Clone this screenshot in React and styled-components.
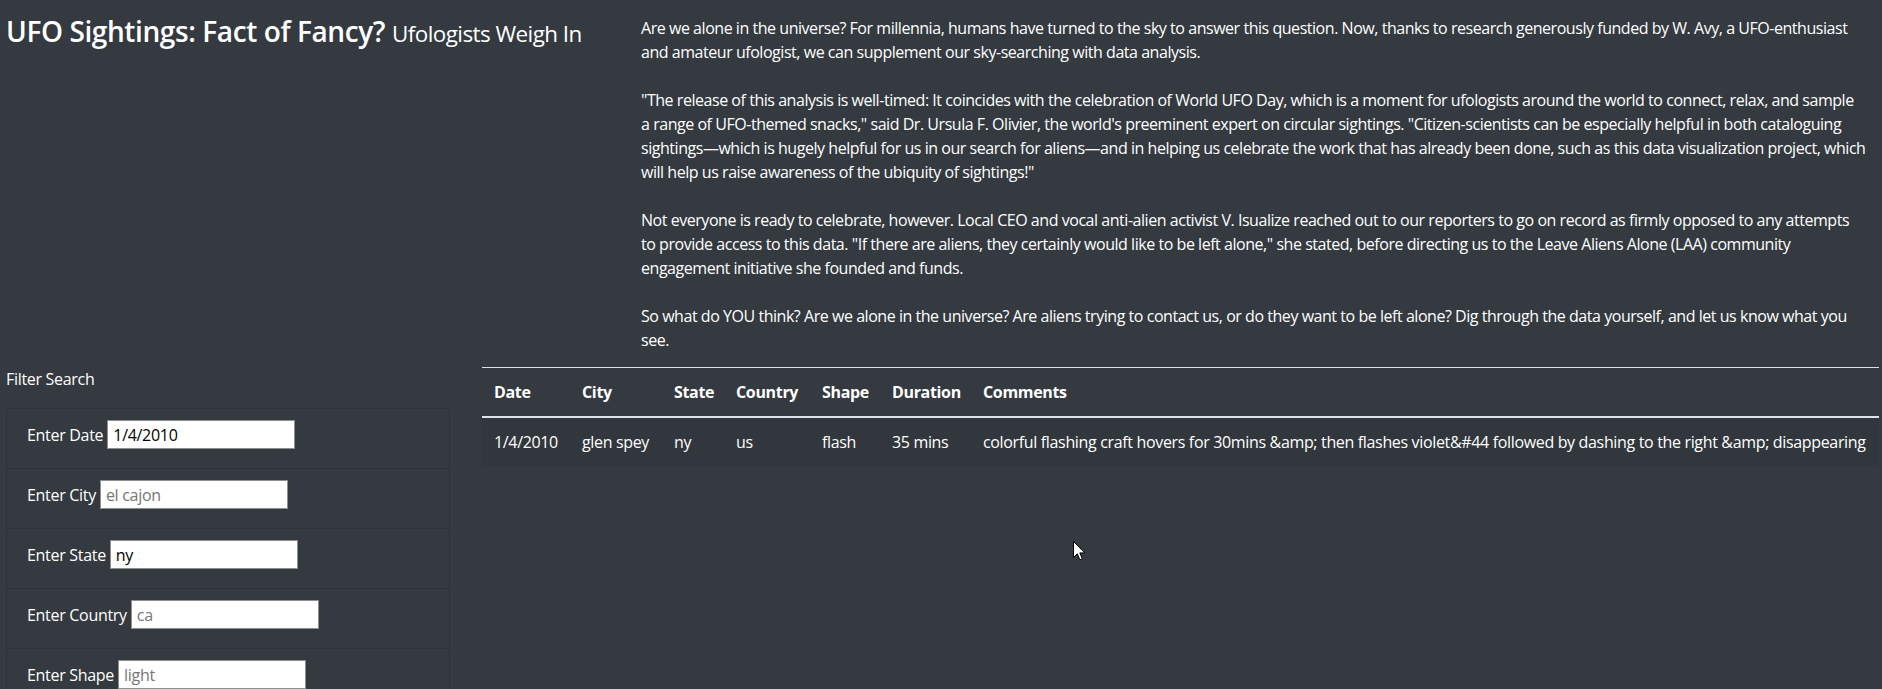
import React from "react";
import styled, { createGlobalStyle } from "styled-components";

// ================= style ======================= //
const GlobalStyle = createGlobalStyle`
  html, body {
    margin: 0;
    padding: 0;
    background: #343a40;
  }
  body {
    font-family: "Open Sans", "Liberation Sans", sans-serif;
    font-size: 16px;
    line-height: 24px;
    color: #fff;
    letter-spacing: -0.3px;
  }
  * { box-sizing: border-box; }
`;

const Page = styled.div`
  position: relative;
  min-height: 689px;
  padding: 0 3px 0 6px;
  overflow: hidden;
`;

const Intro = styled.section`
  display: flex;
`;

const TitleCol = styled.div`
  width: 621px;
  flex-shrink: 0;
`;

const Title = styled.h3`
  margin: 15px 0 0;
  font-size: 28px;
  font-weight: 600;
  line-height: 1.2;
  letter-spacing: -0.4px;
`;

const SubTitle = styled.small`
  font-size: 80%;
  font-weight: 400;
  letter-spacing: -0.55px;
`;

const Story = styled.div`
  flex: 1;
  padding: 16px 0 0 14px;
  letter-spacing: -0.46px;
`;

const Para = styled.p`
  margin: 0 0 24px;
  white-space: nowrap;
  &:last-child { margin-bottom: 0; }
`;

const Lower = styled.section`
  display: flex;
  margin-top: 15px;
`;

const FilterCol = styled.aside`
  width: 464px;
  flex-shrink: 0;
`;

const FilterTitle = styled.div`
  margin-bottom: 17px;
`;

const FilterList = styled.ul`
  list-style: none;
  margin: 0;
  padding: 0;
  width: 444px;
  border: 1px solid rgba(0, 0, 0, 0.125);
  border-radius: 4px;
`;

const FilterItem = styled.li`
  display: flex;
  align-items: baseline;
  height: 60px;
  padding: 11px 20px 0;
  border-bottom: 1px solid rgba(0, 0, 0, 0.125);
  &:last-child { border-bottom: 0; }
`;

const FieldLabel = styled.label`
  margin-right: 4px;
  white-space: nowrap;
`;

const Field = styled.input`
  width: 188px;
  height: 29px;
  padding: 1px 5px;
  border: 1px solid #8f8f8f;
  border-radius: 0;
  background: #fff;
  color: #000;
  font-family: "Open Sans", "Liberation Sans", sans-serif;
  font-size: 16px;
  letter-spacing: -0.3px;
  &::placeholder { color: #767676; }
`;

const TableCol = styled.div`
  flex: 1;
  padding-left: 12px;
`;

const Table = styled.table`
  width: 100%;
  border-collapse: collapse;
  table-layout: fixed;
  color: #fff;
  letter-spacing: -0.34px;
`;

const HeadCell = styled.th`
  padding: 12px;
  text-align: left;
  font-weight: 700;
  vertical-align: bottom;
  border-top: 1px solid #dee2e6;
  border-bottom: 2px solid #dee2e6;
  white-space: nowrap;
`;

const Row = styled.tr`
  background: rgba(0, 0, 0, 0.05);
`;

const Cell = styled.td`
  padding: 12px;
  white-space: nowrap;
`;

const Cursor = styled.svg`
  position: absolute;
  left: 1073px;
  top: 541px;
  width: 13px;
  height: 20px;
`;

const filters = [
  { label: "Enter Date", value: "1/4/2010" },
  { label: "Enter City", placeholder: "el cajon" },
  { label: "Enter State", value: "ny" },
  { label: "Enter Country", placeholder: "ca" },
  { label: "Enter Shape", placeholder: "light" },
];

const columns = [
  { name: "Date", width: 88 },
  { name: "City", width: 92 },
  { name: "State", width: 62 },
  { name: "Country", width: 86 },
  { name: "Shape", width: 70 },
  { name: "Duration", width: 91 },
  { name: "Comments" },
];

const sightings = [
  {
    datetime: "1/4/2010",
    city: "glen spey",
    state: "ny",
    country: "us",
    shape: "flash",
    duration: "35 mins",
    comments:
      "colorful flashing craft hovers for 30mins &amp; then flashes violet&#44 followed by dashing to the right &amp; disappearing",
  },
];

export default function App() {
  return (
    <Page>
      <GlobalStyle />
      <Intro>
        <TitleCol>
          <Title>
            UFO Sightings: Fact of Fancy? <SubTitle>Ufologists Weigh In</SubTitle>
          </Title>
        </TitleCol>
        <Story>
          <Para>
            Are we alone in the universe? For millennia, humans have turned to the sky to answer this question. Now, thanks to research generously funded by W. Avy, a UFO-enthusiast
            <br />
            and amateur ufologist, we can supplement our sky-searching with data analysis.
          </Para>
          <Para>
            "The release of this analysis is well-timed: It coincides with the celebration of World UFO Day, which is a moment for ufologists around the world to connect, relax, and sample
            <br />
            a range of UFO-themed snacks," said Dr. Ursula F. Olivier, the world's preeminent expert on circular sightings. "Citizen-scientists can be especially helpful in both cataloguing
            <br />
            sightings—which is hugely helpful for us in our search for aliens—and in helping us celebrate the work that has already been done, such as this data visualization project, which
            <br />
            will help us raise awareness of the ubiquity of sightings!"
          </Para>
          <Para>
            Not everyone is ready to celebrate, however. Local CEO and vocal anti-alien activist V. Isualize reached out to our reporters to go on record as firmly opposed to any attempts
            <br />
            to provide access to this data. "If there are aliens, they certainly would like to be left alone," she stated, before directing us to the Leave Aliens Alone (LAA) community
            <br />
            engagement initiative she founded and funds.
          </Para>
          <Para>
            So what do YOU think? Are we alone in the universe? Are aliens trying to contact us, or do they want to be left alone? Dig through the data yourself, and let us know what you
            <br />
            see.
          </Para>
        </Story>
      </Intro>

      <Lower>
        <FilterCol>
          <FilterTitle>Filter Search</FilterTitle>
          <FilterList>
            {filters.map((f) => (
              <FilterItem key={f.label}>
                <FieldLabel>{f.label}</FieldLabel>
                <Field type="text" defaultValue={f.value} placeholder={f.placeholder} />
              </FilterItem>
            ))}
          </FilterList>
        </FilterCol>

        <TableCol>
          <Table>
            <colgroup>
              {columns.map((c) => (
                <col key={c.name} style={c.width ? { width: c.width } : undefined} />
              ))}
            </colgroup>
            <thead>
              <tr>
                {columns.map((c) => (
                  <HeadCell key={c.name}>{c.name}</HeadCell>
                ))}
              </tr>
            </thead>
            <tbody>
              {sightings.map((s) => (
                <Row key={`${s.datetime}-${s.city}`}>
                  <Cell>{s.datetime}</Cell>
                  <Cell>{s.city}</Cell>
                  <Cell>{s.state}</Cell>
                  <Cell>{s.country}</Cell>
                  <Cell>{s.shape}</Cell>
                  <Cell>{s.duration}</Cell>
                  <Cell>{s.comments}</Cell>
                </Row>
              ))}
            </tbody>
          </Table>
        </TableCol>
      </Lower>

      <Cursor viewBox="0 0 13 20">
        <path d="M0.5 0.5 L0.5 16.5 L4.3 12.8 L6.9 18.8 L9.3 17.8 L6.8 11.9 L11.8 11.9 Z" fill="#fff" stroke="#000" strokeWidth="1" strokeLinejoin="miter" />
      </Cursor>
    </Page>
  );
}
